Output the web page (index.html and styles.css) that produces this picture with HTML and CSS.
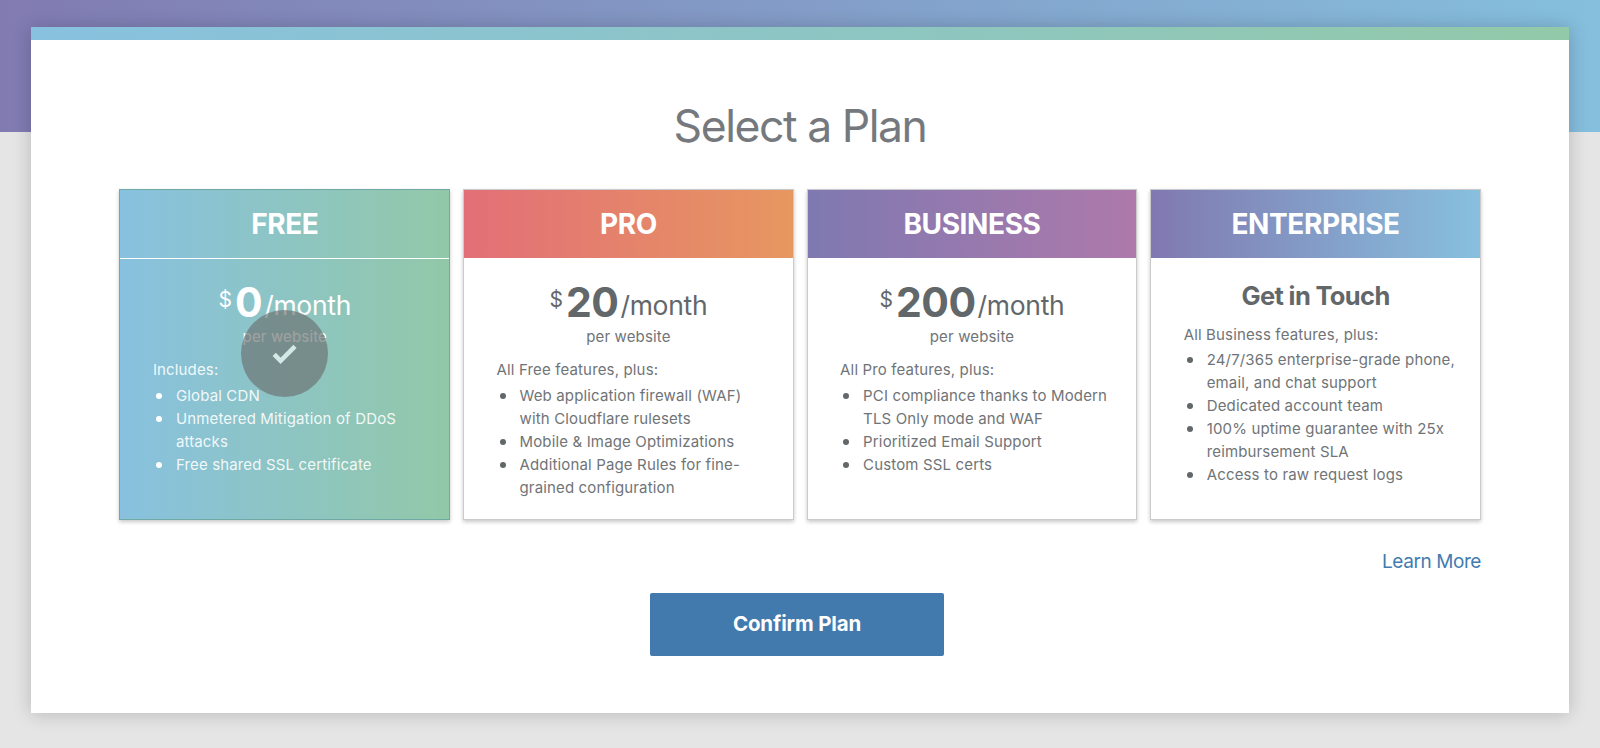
FILE: index.html
```html
<!DOCTYPE html>
<html lang="en">
<head>
<meta charset="utf-8">
<title>Select a Plan</title>
<link rel="stylesheet" href="styles.css">
</head>
<body>
<main class="panel">
  <div class="panel-accent"></div>
  <h1 class="title">Select a Plan</h1>
  <div class="plans">
    <section class="plan plan-free selected">
      <h2 class="plan-name name-free">FREE</h2>
      <div class="plan-body">
        <p class="price"><span class="currency">$</span><span class="amount">0</span><span class="period">/month</span></p>
        <p class="unit">per website</p>
        <p class="intro">Includes:</p>
        <ul class="features">
          <li>Global CDN</li>
          <li>Unmetered Mitigation of DDoS<br>attacks</li>
          <li>Free shared SSL certificate</li>
        </ul>
      </div>
      <div class="check">
        <svg class="check-icon" viewBox="0 0 26 22"><path d="M2.2 11.4 L8.6 17.8 L23 3.4" fill="none" stroke="#d3e9e7" stroke-width="4.6"/></svg>
      </div>
    </section>
    <section class="plan">
      <h2 class="plan-name name-pro">PRO</h2>
      <div class="plan-body">
        <p class="price"><span class="currency">$</span><span class="amount">20</span><span class="period">/month</span></p>
        <p class="unit">per website</p>
        <p class="intro">All Free features, plus:</p>
        <ul class="features">
          <li>Web application firewall (WAF)<br>with Cloudflare rulesets</li>
          <li>Mobile &amp; Image Optimizations</li>
          <li>Additional Page Rules for fine-<br>grained configuration</li>
        </ul>
      </div>
    </section>
    <section class="plan">
      <h2 class="plan-name name-business">BUSINESS</h2>
      <div class="plan-body">
        <p class="price"><span class="currency">$</span><span class="amount">200</span><span class="period">/month</span></p>
        <p class="unit">per website</p>
        <p class="intro">All Pro features, plus:</p>
        <ul class="features">
          <li>PCI compliance thanks to Modern<br>TLS Only mode and WAF</li>
          <li>Prioritized Email Support</li>
          <li>Custom SSL certs</li>
        </ul>
      </div>
    </section>
    <section class="plan">
      <h2 class="plan-name name-enterprise">ENTERPRISE</h2>
      <div class="plan-body">
        <p class="contact">Get in Touch</p>
        <p class="intro">All Business features, plus:</p>
        <ul class="features">
          <li>24/7/365 enterprise-grade phone,<br>email, and chat support</li>
          <li>Dedicated account team</li>
          <li>100% uptime guarantee with 25x<br>reimbursement SLA</li>
          <li>Access to raw request logs</li>
        </ul>
      </div>
    </section>
  </div>
  <div class="more"><a class="more-link" href="#">Learn More</a></div>
  <div class="actions"><button class="confirm" type="button">Confirm Plan</button></div>
</main>
</body>
</html>
```
FILE: styles.css
```css
* { box-sizing: border-box; }
body {
  margin: 0;
  height: 748px;
  padding: 27px 31px 0 31px;
  overflow: hidden;
  font-family: Inter, "Liberation Sans", sans-serif;
  color: #62676a;
  background: linear-gradient(90deg, #817bb2, #85bfdd) 0 0 / 100% 132px no-repeat #e5e5e5;
}
h1, h2, p, ul { margin: 0; padding: 0; font-weight: 400; }

.panel {
  height: 686.4px;
  background: #fff;
  box-shadow: 0 1px 18px rgba(0, 0, 0, .2);
}
.panel-accent { height: 13px; background: linear-gradient(90deg, #88c1df, #92c9a9); }
.title {
  padding-top: 59px;
  height: 148.5px;
  text-align: center;
  font-size: 44.5px;
  line-height: 54px;
  letter-spacing: -1.45px;
  color: #75797e;
}

.plans {
  display: grid;
  grid-template-columns: repeat(4, minmax(0, 1fr));
  gap: 12.8px;
  padding: 0 88px 0 88.4px;
}
.plan {
  position: relative;
  height: 331.7px;
  border: 1.3px solid #c8cacb;
  background: #fff;
  box-shadow: 0 2px 4px rgba(0, 0, 0, .22);
}
.plan-name {
  height: 68px;
  text-align: center;
  font-size: 28px;
  line-height: 69px;
  font-weight: 700;
  letter-spacing: -.4px;
  color: #fff;
}
.name-pro { background: linear-gradient(90deg, #e26f77, #e79760); }
.name-business { background: linear-gradient(90deg, #7f79b1, #ae79ab); }
.name-enterprise { background: linear-gradient(90deg, #8079b1, #87c0de); }
.plan-body { padding: 20px 20px 0 32.5px; }
.price, .unit, .contact { margin-left: -12.5px; text-align: center; }
.price { height: 48px; line-height: 48px; font-size: 41px; white-space: nowrap; }
.currency { font-size: 21px; line-height: 0; vertical-align: 9.5px; margin-right: 3px; }
.amount { font-weight: 700; letter-spacing: -.5px; }
.period { font-size: 26.5px; line-height: 0; vertical-align: 1.5px; margin-left: 2px; letter-spacing: -.3px; }
.unit, .intro, .features { font-size: 15px; line-height: 23px; letter-spacing: .15px; color: #707477; }
.unit { margin: -.6px 0 10.4px -12.5px; }
.contact { font-size: 25.5px; font-weight: 700; line-height: 35.5px; letter-spacing: -.65px; margin-bottom: 9.5px; }
.intro { margin-bottom: 2.7px; }
.features { list-style: none; }
.features li { display: grid; grid-template-columns: 23px 1fr; white-space: nowrap; }
.features li::before {
  content: "";
  width: 6px;
  height: 6px;
  margin: 9px 0 0 3.3px;
  border-radius: 50%;
  background: #62676a;
}

.selected {
  border-color: #71a9a4;
  color: #fff;
  background: linear-gradient(90deg, #88c1df, #92c8a8);
}
.name-free { border-bottom: 1.5px solid #fff; height: 69px; }
.selected .plan-body { padding-top: 19px; }
.selected .intro, .selected .features { color: rgba(255, 255, 255, .9); }
.selected .unit { color: #fff; }
.selected .features li::before { background: #fff; }
.check {
  position: absolute;
  left: 120.5px;
  top: 120.3px;
  width: 87.5px;
  height: 87.5px;
  border-radius: 50%;
  background: rgba(107, 109, 109, .64);
  display: flex;
  align-items: center;
  justify-content: center;
}
.check-icon { width: 26px; height: 22px; }

.more { padding: 29px 88px 0 0; height: 73px; text-align: right; }
.more-link { font-size: 19px; line-height: 26px; letter-spacing: -.42px; color: #437cb0; text-decoration: none; }
.actions { display: flex; justify-content: center; padding-right: 6px; }
.confirm {
  width: 294px;
  height: 63px;
  padding: 0 0 1px;
  border: 0;
  border-radius: 2px;
  background: #437aad;
  color: #fff;
  font: 700 20.5px/62px Inter, "Liberation Sans", sans-serif;
  letter-spacing: -.15px;
}
```
